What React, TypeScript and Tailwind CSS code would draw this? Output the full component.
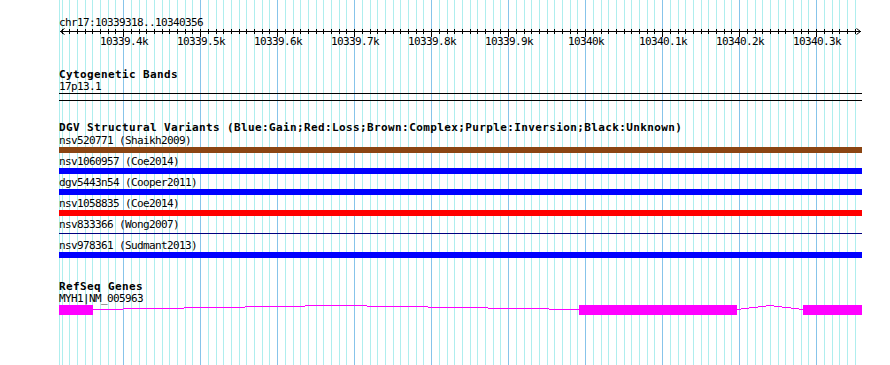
import React from 'react';

const START = 10339318;
const END = 10340356;
const LEFT = 60;
const WIDTH = 800;

// bp -> pixel x on the panel
const px = (bp: number) => Math.round(LEFT + ((bp - START) * WIDTH) / (END - START + 1));

const ticks: number[] = [];
for (let bp = 10339320; bp <= 10340350; bp += 10) ticks.push(bp);

const variants = [
    { name: 'nsv520771 (Shaikh2009)', kind: 'bar', color: 'bg-[#8b4513]' },
    { name: 'nsv1060957 (Coe2014)', kind: 'bar', color: 'bg-[#0000ff]' },
    { name: 'dgv5443n54 (Cooper2011)', kind: 'bar', color: 'bg-[#0000ff]' },
    { name: 'nsv1058835 (Coe2014)', kind: 'bar', color: 'bg-[#ff0000]' },
    { name: 'nsv833366 (Wong2007)', kind: 'line', color: 'bg-[#000080]' },
    { name: 'nsv978361 (Sudmant2013)', kind: 'bar', color: 'bg-[#0000ff]' },
];

// gd-style fonts: 6px small, 7px bold; the line box is 12px, glyphs sit 1px low
const mono = "h-[12px] pt-px font-['DejaVu_Sans_Mono',monospace] text-[11px] leading-[12px] tracking-[-0.62px] text-black whitespace-nowrap";
const heading = "h-[12px] pt-px font-['DejaVu_Sans_Mono',monospace] text-[11px] leading-[12px] tracking-[0.38px] font-bold text-black whitespace-nowrap";

function Grid() {
    return (
        <svg className="absolute inset-0" width={890} height={365} shapeRendering="crispEdges">
            <rect x={59} y={0} width={1} height={365} fill="#afeeee" />
            {ticks.map((bp) => (
                <rect
                    key={bp}
                    x={px(bp)}
                    y={0}
                    width={1}
                    height={365}
                    fill={bp % 100 === 0 ? '#87c4ea' : '#afeeee'}
                />
            ))}
        </svg>
    );
}

function Ruler() {
    return (
        <svg width={890} height={23} viewBox="0 27 890 23" shapeRendering="crispEdges" className="block">
            <rect x={60} y={31} width={801} height={1} fill="#000" />
            {/* arrow heads */}
            <path d="M60.5 31.5 L64.5 28.5 M60.5 31.5 L64.5 34.5" stroke="#000" fill="none" shapeRendering="auto" />
            <path d="M860.5 31.5 L856.5 28.5 M860.5 31.5 L856.5 34.5" stroke="#000" fill="none" shapeRendering="auto" />
            {ticks.map((bp) => (
                <rect
                    key={bp}
                    x={px(bp)}
                    y={29}
                    width={1}
                    height={bp % 100 === 0 ? 8 : 5}
                    fill="#000"
                />
            ))}
            {ticks
                .filter((bp) => bp % 100 === 0)
                .map((bp) => {
                    const k = bp / 1000;
                    const label = (Number.isInteger(k) ? k.toFixed(0) : k.toFixed(1)) + 'k';
                    return (
                        <text
                            key={bp}
                            x={px(bp) + 1}
                            y={45}
                            textAnchor="middle"
                            fontFamily="DejaVu Sans Mono, monospace"
                            fontSize={11}
                            letterSpacing={-0.62}
                            fill="#000"
                        >
                            {label}
                        </text>
                    );
                })}
        </svg>
    );
}

function Gene() {
    return (
        <svg width={890} height={14} viewBox="0 304 890 14" shapeRendering="crispEdges" className="block">
            <polyline points="93,309.5 336,305.5 579,309.5" stroke="#ff00ff" fill="none" strokeWidth={1} />
            <polyline points="737,309.5 770,305.5 803,309.5" stroke="#ff00ff" fill="none" strokeWidth={1} />
            <rect x={59} y={305} width={34} height={10} fill="#ff00ff" />
            <rect x={579} y={305} width={158} height={10} fill="#ff00ff" />
            <rect x={803} y={305} width={59} height={10} fill="#ff00ff" />
        </svg>
    );
}

function VariantRow({ name, kind, color }: { name: string; kind: string; color: string }) {
    return (
        <div className="flex flex-col gap-px h-[21px]">
            <div className={mono}>{name}</div>
            {kind === 'bar' ? (
                <div className={`h-[6px] ${color}`} />
            ) : (
                <div className="h-[6px] pt-[2px]">
                    <div className={`h-px ${color}`} />
                </div>
            )}
        </div>
    );
}

export default function App() {
    return (
        <div className="relative w-[890px] h-[365px] bg-white overflow-hidden">
            <Grid />
            <div className="relative flex flex-col">
                {/* Ruler */}
                <div className="pt-[16px] pl-[59px]">
                    <div className={mono}>chr17:10339318..10340356</div>
                </div>
                <div className="-mt-px">
                    <Ruler />
                </div>

                {/* Cytogenetic bands */}
                <div className="flex flex-col pl-[59px] w-[862px] mt-[18px]">
                    <div className={heading}>Cytogenetic Bands</div>
                    <div className={mono}>17p13.1</div>
                    <div className="mt-px h-[8px] border-y border-black" />
                </div>

                {/* DGV */}
                <div className="flex flex-col gap-px pl-[59px] w-[862px] mt-[20px]">
                    <div className={heading}>
                        DGV Structural Variants (Blue:Gain;Red:Loss;Brown:Complex;Purple:Inversion;Black:Unknown)
                    </div>
                    <div className="flex flex-col">
                        {variants.map((v) => (
                            <VariantRow key={v.name} {...v} />
                        ))}
                    </div>
                </div>

                {/* RefSeq */}
                <div className="flex flex-col pl-[59px] mt-[20px]">
                    <div className={heading}>RefSeq Genes</div>
                    <div className={mono}>MYH1|NM_005963</div>
                </div>
                <Gene />
            </div>
        </div>
    );
}
